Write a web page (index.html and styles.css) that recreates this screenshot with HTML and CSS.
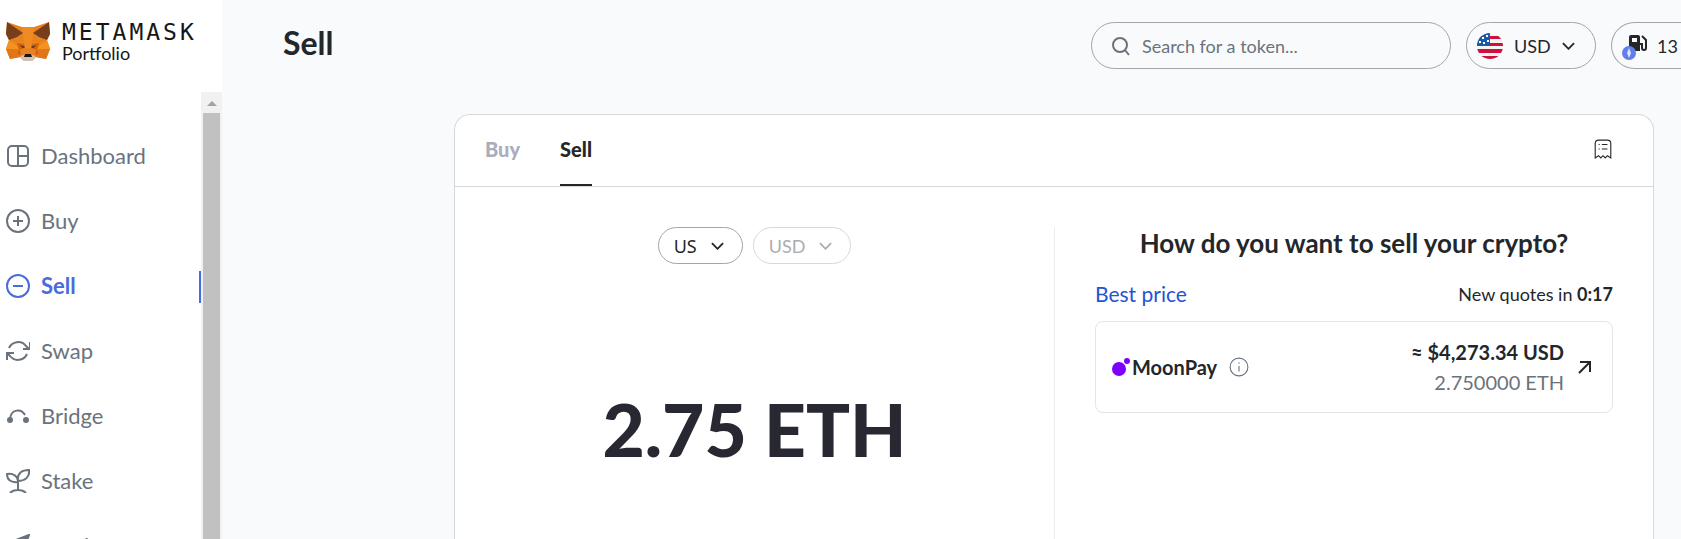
FILE: index.html
```html
<!DOCTYPE html>
<html lang="en">
<head>
    <meta charset="UTF-8">
    <title>Sell - MetaMask Portfolio</title>
    <link rel="stylesheet" href="styles.css">
</head>
<body>
    <div class="page">
        <aside class="sidebar">
            <a href="#" class="logo">
                <svg class="fox" viewBox="0 0 44 40">
                    <path fill="#e8821e" d="M1 1L16 6H28L43 1L44 13L41 19L44 28L40 38L30 36L26 40H18L14 36L4 38L0 28L3 19L0 13Z"/>
                    <path fill="#f08a22" d="M16 6H28L25 27H19Z"/>
                    <path fill="#f5911e" d="M3 19L14 27L13 29L0 28ZM41 19L30 27L31 29L44 28Z"/>
                    <path fill="#e2761b" d="M0 28H13L14 36L4 38ZM44 28H31L30 36L40 38Z"/>
                    <path fill="#763e1a" d="M1 1L17 12L11 16L3 19L0 13ZM43 1L27 12L33 16L41 19L44 13Z"/>
                    <path fill="#d7600f" d="M11 22L18 23L19 27L13 29ZM33 22L26 23L25 27L31 29Z"/>
                    <path fill="#d7600f" d="M12 30L14 29L15 34L12 33ZM32 30L30 29L29 34L32 33Z"/>
                    <path fill="#233447" d="M14 24L19 26L17 27ZM30 24L25 26L27 27Z"/>
                    <path fill="#d5bfb2" d="M14 36L19 33H25L30 36L26 40H18Z"/>
                    <path fill="#161616" d="M19 33H25L26 36H18Z"/>
                </svg>
                <span class="logo-text">
                    <span class="logo-name">METAMASK</span>
                    <span class="logo-sub">Portfolio</span>
                </span>
            </a>
            <div class="sidebar-body">
                <nav>
                    <ul>
                        <li><a href="#">
                            <svg viewBox="0 0 24 24"><rect x="2" y="2" width="20" height="20" rx="4"/><path d="M12 2V22M12 12H22"/></svg>
                            Dashboard</a></li>
                        <li><a href="#">
                            <svg viewBox="0 0 24 24"><circle cx="12" cy="12" r="11"/><path d="M7 12H17M12 7V17"/></svg>
                            Buy</a></li>
                        <li><a href="#" class="active">
                            <svg viewBox="0 0 24 24"><circle cx="12" cy="12" r="11"/><path d="M7 12H17"/></svg>
                            Sell</a></li>
                        <li><a href="#">
                            <svg viewBox="0 0 24 24"><path d="M3 9A10 10 0 0 1 20 7L23 10M24 3V10H17M21 15A10 10 0 0 1 4 17L1 14M1 21V14H8"/></svg>
                            Swap</a></li>
                        <li><a href="#">
                            <svg viewBox="0 0 24 24"><path d="M4 15C5 5 15 4 19 11"/><circle class="dot" cx="4" cy="16" r="2"/><circle class="dot" cx="20" cy="16" r="2"/></svg>
                            Bridge</a></li>
                        <li><a href="#">
                            <svg viewBox="0 0 24 24"><path d="M12 21V12M12 13C4 14 1 10 1 5C7 4 12 7 12 13ZM12 12C11 4 16 1 23 1C24 8 19 12 12 12ZM4 24C8 20 16 20 20 24"/></svg>
                            Stake</a></li>
                        <li><a href="#">
                            <svg viewBox="0 0 24 24"><path class="dot" d="M23 1L2 9L10 14L15 22Z"/></svg>
                            Send</a></li>
                    </ul>
                </nav>
                <div class="scrollbar">
                    <svg class="scroll-arrow" viewBox="0 0 10 5"><path d="M0 5L5 0L10 5Z"/></svg>
                    <div class="scroll-thumb"></div>
                </div>
            </div>
        </aside>

        <main class="main">
            <header class="header">
                <h1>Sell</h1>
                <label class="search">
                    <svg viewBox="0 0 18 20"><circle cx="8" cy="9" r="7"/><path d="M13 14L17 19"/></svg>
                    <input type="text" placeholder="Search for a token..." aria-label="Search for a token">
                </label>
                <button class="pill currency" type="button">
                    <svg class="flag" viewBox="0 0 26 26">
                        <clipPath id="flag-round"><circle cx="13" cy="13" r="13"/></clipPath>
                        <g clip-path="url(#flag-round)">
                            <path fill="#f4f4f6" d="M0 0H26V26H0Z"/>
                            <path fill="#d0103a" d="M0 3H26V6H0ZM0 10H26V13H0ZM0 16H26V20H0ZM0 23H26V26H0Z"/>
                            <path fill="#1a5ba8" d="M0 0H13V13H0Z"/>
                            <path fill="#fff" d="M5 4h2v2h-2zM9 2h2v2h-2zM2 8h2v2h-2zM6 9h2v2h-2zM10 7h2v2h-2z"/>
                        </g>
                    </svg>
                    USD
                    <svg class="chevron" viewBox="0 0 14 8"><path d="M1 1L7 7L13 1"/></svg>
                </button>
                <button class="pill gas" type="button">
                    <svg class="gas-icon" viewBox="0 0 28 30">
                        <path fill="#24272a" fill-rule="evenodd" d="M10 4H17Q19 4 19 6V20H8V6Q8 4 10 4ZM11 7V11H16V7Z"/>
                        <path fill="none" stroke="#24272a" stroke-width="2" d="M19 13H21V17Q21 19 23 19T25 17V9L21 5"/>
                        <circle cx="8" cy="22" r="7" fill="#627eea"/>
                        <path fill="#dfe5fb" d="M8 17L10 22L8 27L6 22Z"/>
                    </svg>
                    13
                </button>
            </header>

            <section class="card">
                <div class="tabs">
                    <button class="tab" type="button">Buy</button>
                    <button class="tab tab-active" type="button">Sell</button>
                    <button class="orders" type="button" aria-label="Orders">
                        <svg viewBox="0 0 16 18"><path d="M1 17V4Q1 1 4 1H12Q15 1 15 4V17L12 15L10 17L8 15L6 17L4 15ZM4 5H5M7 5H12M4 9H5M7 9H12"/></svg>
                    </button>
                </div>
                <div class="card-body">
                    <div class="amount-col">
                        <div class="filters">
                            <button class="filter" type="button">US
                                <svg class="chevron" viewBox="0 0 14 8"><path d="M1 1L7 7L13 1"/></svg>
                            </button>
                            <button class="filter filter-muted" type="button" disabled>USD
                                <svg class="chevron" viewBox="0 0 14 8"><path d="M1 1L7 7L13 1"/></svg>
                            </button>
                        </div>
                        <div class="amount">2.75 ETH</div>
                    </div>
                    <div class="quotes-col">
                        <h2>How do you want to sell your crypto?</h2>
                        <div class="quotes-head">
                            <span class="best">Best price</span>
                            <span class="timer">New quotes in <b>0:17</b></span>
                        </div>
                        <a href="#" class="quote">
                            <svg class="moon" viewBox="0 0 18 18"><circle cx="7" cy="11" r="7"/><circle cx="15" cy="3" r="3"/></svg>
                            <span class="provider">MoonPay</span>
                            <svg class="info" viewBox="0 0 18 18"><circle cx="9" cy="9" r="8"/><path d="M9 8V13M9 5V6"/></svg>
                            <span class="price">
                                <b>≈ $4,273.34 USD</b>
                                <span>2.750000 ETH</span>
                            </span>
                            <svg class="arrow" viewBox="0 0 14 14"><path d="M1 13L12 2M2 2H12V12"/></svg>
                        </a>
                    </div>
                </div>
            </section>
        </main>
    </div>
</body>
</html>
```
FILE: styles.css
```css
* {
    box-sizing: border-box;
}

body {
    margin: 0;
    font-family: Lato, sans-serif;
    font-size: 20px;
    line-height: 24px;
    color: #24272a;
    background-color: #f9fafc;
}

a {
    color: inherit;
    text-decoration: none;
}

button {
    font: inherit;
    color: inherit;
    background: none;
    border: none;
    padding: 0;
    cursor: pointer;
}

svg {
    flex: none;
    fill: none;
    stroke: currentColor;
    stroke-width: 2;
}

.page {
    display: flex;
    height: 100vh;
    overflow: hidden;
}

/* sidebar */
.sidebar {
    display: flex;
    flex-direction: column;
    flex: none;
    width: 222px;
    background-color: #fff;
}

.logo {
    display: flex;
    gap: 12px;
    height: 92px;
    padding: 20px 0 0 6px;
    color: #161616;
}

.fox {
    width: 44px;
    height: 42px;
    stroke: none;
}

.logo-text {
    display: flex;
    flex-direction: column;
}

.logo-name {
    font-family: "DejaVu Sans Mono", monospace;
    font-size: 23px;
    letter-spacing: 3px;
}

.logo-sub {
    font-size: 18px;
    line-height: 18px;
}

.sidebar-body {
    display: flex;
    flex: 1;
    min-height: 0;
}

nav {
    flex: 1;
    overflow: hidden;
}

nav ul {
    list-style: none;
    margin: 0;
    padding: 49px 0 0;
}

nav li {
    margin-bottom: 33px;
}

nav a {
    display: flex;
    align-items: center;
    gap: 11px;
    height: 32px;
    padding-left: 6px;
    color: #6a737d;
    font-size: 22px;
    line-height: 20px;
    padding-bottom: 2px;
}

nav a svg {
    width: 24px;
    height: 24px;
}

nav .dot {
    fill: currentColor;
}

nav .active {
    color: #4a6bdc;
    font-weight: bold;
    border-right: 2px solid #4a6bdc;
}

.scrollbar {
    display: flex;
    flex-direction: column;
    align-items: center;
    width: 21px;
    background-color: #f1f1f1;
}

.scroll-arrow {
    width: 10px;
    height: 5px;
    margin: 9px 0 7px;
    fill: #a3a3a3;
    stroke: none;
}

.scroll-thumb {
    flex: 1;
    width: 17px;
    background-color: #c1c1c1;
}

/* top bar */
.main {
    display: flex;
    flex-direction: column;
    flex: 1;
    min-width: 0;
}

.header {
    display: flex;
    align-items: flex-start;
    gap: 15px;
    padding: 22px 0 0 61px;
}

h1 {
    margin: 0 auto 0 0;
    font-size: 32px;
    line-height: 42px;
}

.search,
.pill {
    display: flex;
    align-items: center;
    height: 47px;
    border: 1px solid #9fa6ae;
    border-radius: 24px;
    font-size: 18px;
}

.search {
    gap: 12px;
    width: 360px;
    padding: 0 20px;
}

.search svg {
    width: 18px;
    height: 20px;
    color: #6a737d;
}

.search input {
    flex: 1;
    min-width: 0;
    border: none;
    outline: none;
    background: none;
    padding: 0;
    font: inherit;
}

.search input::placeholder {
    color: #6a737d;
    opacity: 1;
}

.currency {
    width: 130px;
    padding-left: 10px;
    gap: 11px;
}

.flag {
    width: 26px;
    height: 26px;
    stroke: none;
}

.chevron {
    width: 13px;
    height: 8px;
}

.gas {
    width: 70px;
    padding-left: 9px;
    gap: 8px;
    border-right: none;
    border-radius: 24px 0 0 24px;
}

.gas-icon {
    width: 28px;
    height: 30px;
    stroke: none;
}

/* sell card */
.card {
    display: flex;
    flex-direction: column;
    flex: 1;
    margin: 45px 27px 0 232px;
    background-color: #fff;
    border: 1px solid #d6d9dc;
    border-bottom: none;
    border-radius: 16px 16px 0 0;
}

.tabs {
    display: flex;
    gap: 40px;
    height: 72px;
    padding: 0 41px 0 30px;
    border-bottom: 1px solid #d6d9dc;
}

.tab {
    padding-bottom: 2px;
    border-bottom: 2px solid transparent;
    color: #a9adbc;
    font-weight: 900;
}

.tab-active {
    color: #24272a;
    border-color: #24272a;
}

.orders {
    margin-left: auto;
}

.orders svg {
    width: 18px;
    height: 20px;
    stroke-width: 1;
}

.card-body {
    display: grid;
    grid-template-columns: 1fr 1fr;
    flex: 1;
    padding-top: 40px;
}

.filters {
    display: flex;
    justify-content: center;
    gap: 10px;
}

.filter {
    display: flex;
    align-items: center;
    gap: 14px;
    height: 37px;
    padding: 0 18px 0 15px;
    border: 1px solid #9fa6ae;
    border-radius: 20px;
    font-family: "Noto Sans", sans-serif;
    font-size: 18px;
}

.filter-muted {
    border-color: #d6d9dc;
    color: #a9adb2;
    font-family: inherit;
}

.amount {
    margin-top: 120px;
    text-align: center;
    font-size: 73px;
    line-height: 90px;
    font-weight: 900;
    color: #272832;
}

.quotes-col {
    padding: 0 40px;
    border-left: 1px solid #eaecee;
}

h2 {
    margin: 0;
    text-align: center;
    font-size: 26px;
    line-height: 32px;
}

.quotes-head {
    display: flex;
    justify-content: space-between;
    padding: 23px 0 15px;
}

.best {
    color: #2453d6;
    font-size: 21px;
}

.timer {
    font-size: 18px;
}

.quote {
    display: flex;
    align-items: center;
    height: 92px;
    padding: 0 20px 0 16px;
    border: 1px solid #e3e5e8;
    border-radius: 8px;
}

.moon {
    width: 18px;
    height: 18px;
    fill: #7d00ff;
    stroke: none;
}

.provider {
    margin: 0 12px 0 2px;
    font-weight: bold;
}

.info {
    width: 20px;
    height: 20px;
    color: #6a737d;
    stroke-width: 1;
}

.price {
    display: flex;
    flex-direction: column;
    margin: 0 14px 0 auto;
    text-align: right;
    line-height: 30px;
}

.price span {
    color: #6a737d;
}

.arrow {
    width: 14px;
    height: 14px;
}
```
